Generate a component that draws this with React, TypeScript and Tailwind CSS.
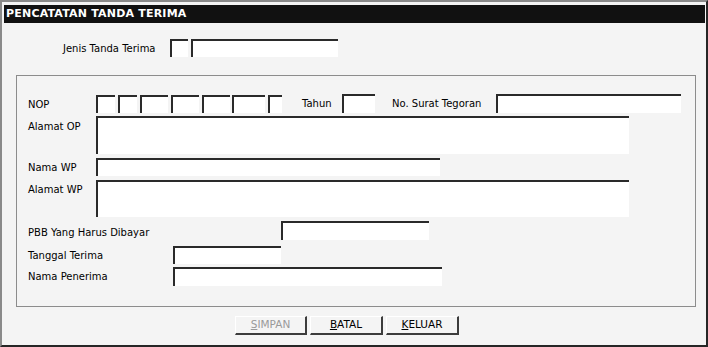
import * as React from "react";

const font = { fontFamily: '"DejaVu Sans", Verdana, sans-serif' };

function Box({ className = "" }: { className?: string }) {
  return (
    <div
      className={
        "bg-white border-t-2 border-l-2 border-t-[#2a2a2a] border-l-[#2a2a2a] shrink-0 " +
        className
      }
    />
  );
}

function Btn({ label, disabled }: { label: string; disabled?: boolean }) {
  return (
    <div
      className={
        "h-[19px] flex items-center justify-center bg-[#f4f4f4] border-t border-l border-white border-r-2 border-b-2 border-r-[#3c3c3c] border-b-[#3c3c3c] text-[10.5px] " +
        (disabled ? "text-[#9a9a9a]" : "text-black")
      }
    >
      <span className="underline">{label[0]}</span>
      {label.slice(1)}
    </div>
  );
}

export default function App() {
  return (
    <div
      className="w-[708px] h-[347px] bg-[#f4f4f4] border-t-2 border-l-2 border-t-[#8a8a8a] border-l-[#8a8a8a] border-r-2 border-b-2 border-r-[#262626] border-b-[#262626] flex flex-col text-[10px] text-black overflow-hidden"
      style={font}
    >
      {/* Title bar */}
      <div className="mt-[3px] ml-[2px] mr-[1px] h-[18px] bg-[#111111] text-white font-bold text-[11px] leading-[18px] pl-[2px] tracking-[0.2px]">
        PENCATATAN TANDA TERIMA
      </div>

      {/* Jenis Tanda Terima */}
      <div className="flex items-center mt-[16px] ml-[61px] h-[18px]">
        <div className="w-[107px]">Jenis Tanda Terima</div>
        <Box className="w-[18px] h-[18px]" />
        <Box className="ml-[3px] w-[147px] h-[18px]" />
      </div>

      {/* Group box */}
      <div className="mt-[18px] ml-[14px] w-[680px] h-[232px] border border-[#8c8c8c] pl-[11px] pt-[18px] flex flex-col">
        {/* NOP row */}
        <div className="flex items-center h-[19px]">
          <div className="w-[68px] pt-[1px]">NOP</div>
          <Box className="w-[19px] h-[18px]" />
          <Box className="ml-[3px] w-[19px] h-[18px]" />
          <Box className="ml-[3px] w-[28px] h-[18px]" />
          <Box className="ml-[3px] w-[28px] h-[18px]" />
          <Box className="ml-[3px] w-[28px] h-[18px]" />
          <Box className="ml-[2px] w-[33px] h-[18px]" />
          <Box className="ml-[3px] w-[14px] h-[18px]" />
          <div className="ml-[20px] w-[40px]">Tahun</div>
          <Box className="w-[33px] h-[19px]" />
          <div className="ml-[17px] w-[104px]">No. Surat Tegoran</div>
          <Box className="w-[185px] h-[19px]" />
        </div>

        {/* Alamat OP */}
        <div className="flex mt-[3px]">
          <div className="w-[68px] pt-[3px]">Alamat OP</div>
          <Box className="w-[533px] h-[38px]" />
        </div>

        {/* Nama WP */}
        <div className="flex items-center mt-[4px]">
          <div className="w-[68px]">Nama WP</div>
          <Box className="w-[344px] h-[18px]" />
        </div>

        {/* Alamat WP */}
        <div className="flex mt-[4px]">
          <div className="w-[68px] pt-[2px]">Alamat WP</div>
          <Box className="w-[533px] h-[37px]" />
        </div>

        {/* PBB */}
        <div className="flex items-center mt-[4px]">
          <div className="w-[253px] pt-[3px]">PBB Yang Harus Dibayar</div>
          <Box className="w-[148px] h-[19px]" />
        </div>

        {/* Tanggal Terima */}
        <div className="flex items-center mt-[6px]">
          <div className="w-[145px]">Tanggal Terima</div>
          <Box className="w-[108px] h-[18px]" />
        </div>

        {/* Nama Penerima */}
        <div className="flex items-center mt-[3px]">
          <div className="w-[145px]">Nama Penerima</div>
          <Box className="w-[269px] h-[19px]" />
        </div>
      </div>

      {/* Buttons */}
      <div className="flex mt-[9px] ml-[233px]">
        <div className="w-[72px]">
          <Btn label="SIMPAN" disabled />
        </div>
        <div className="w-[73px] ml-[3px]">
          <Btn label="BATAL" />
        </div>
        <div className="w-[73px] ml-[3px]">
          <Btn label="KELUAR" />
        </div>
      </div>
    </div>
  );
}
